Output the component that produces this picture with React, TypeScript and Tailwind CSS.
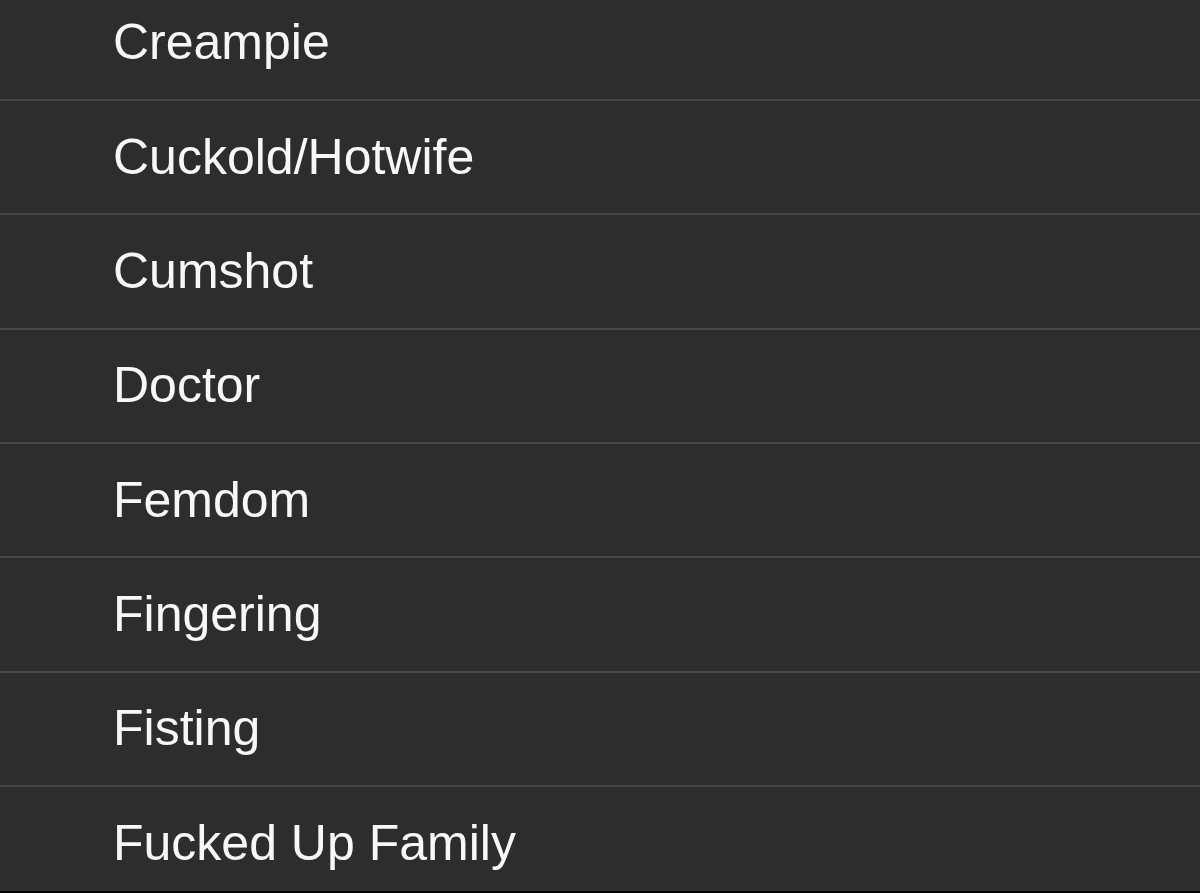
const items = [
  'Creampie',
  'Cuckold/Hotwife',
  'Cumshot',
  'Doctor',
  'Femdom',
  'Fingering',
  'Fisting',
  'Fucked Up Family',
];

export default function App() {
  return (
    <div className="h-[893px] w-full bg-black overflow-hidden">
      <div className="h-[891px] overflow-hidden bg-[#2d2d2d]">
        <ul className="-mt-[13.33px]" style={{ fontFamily: '"Liberation Sans", Arial, sans-serif' }}>
          {items.map((item) => (
            <li
              key={item}
              className="h-[114.33px] flex items-center pl-[113px] border-b-2 border-[#484848] text-[50px] text-[#f7f7f7]"
            >
              {item}
            </li>
          ))}
        </ul>
      </div>
    </div>
  );
}
